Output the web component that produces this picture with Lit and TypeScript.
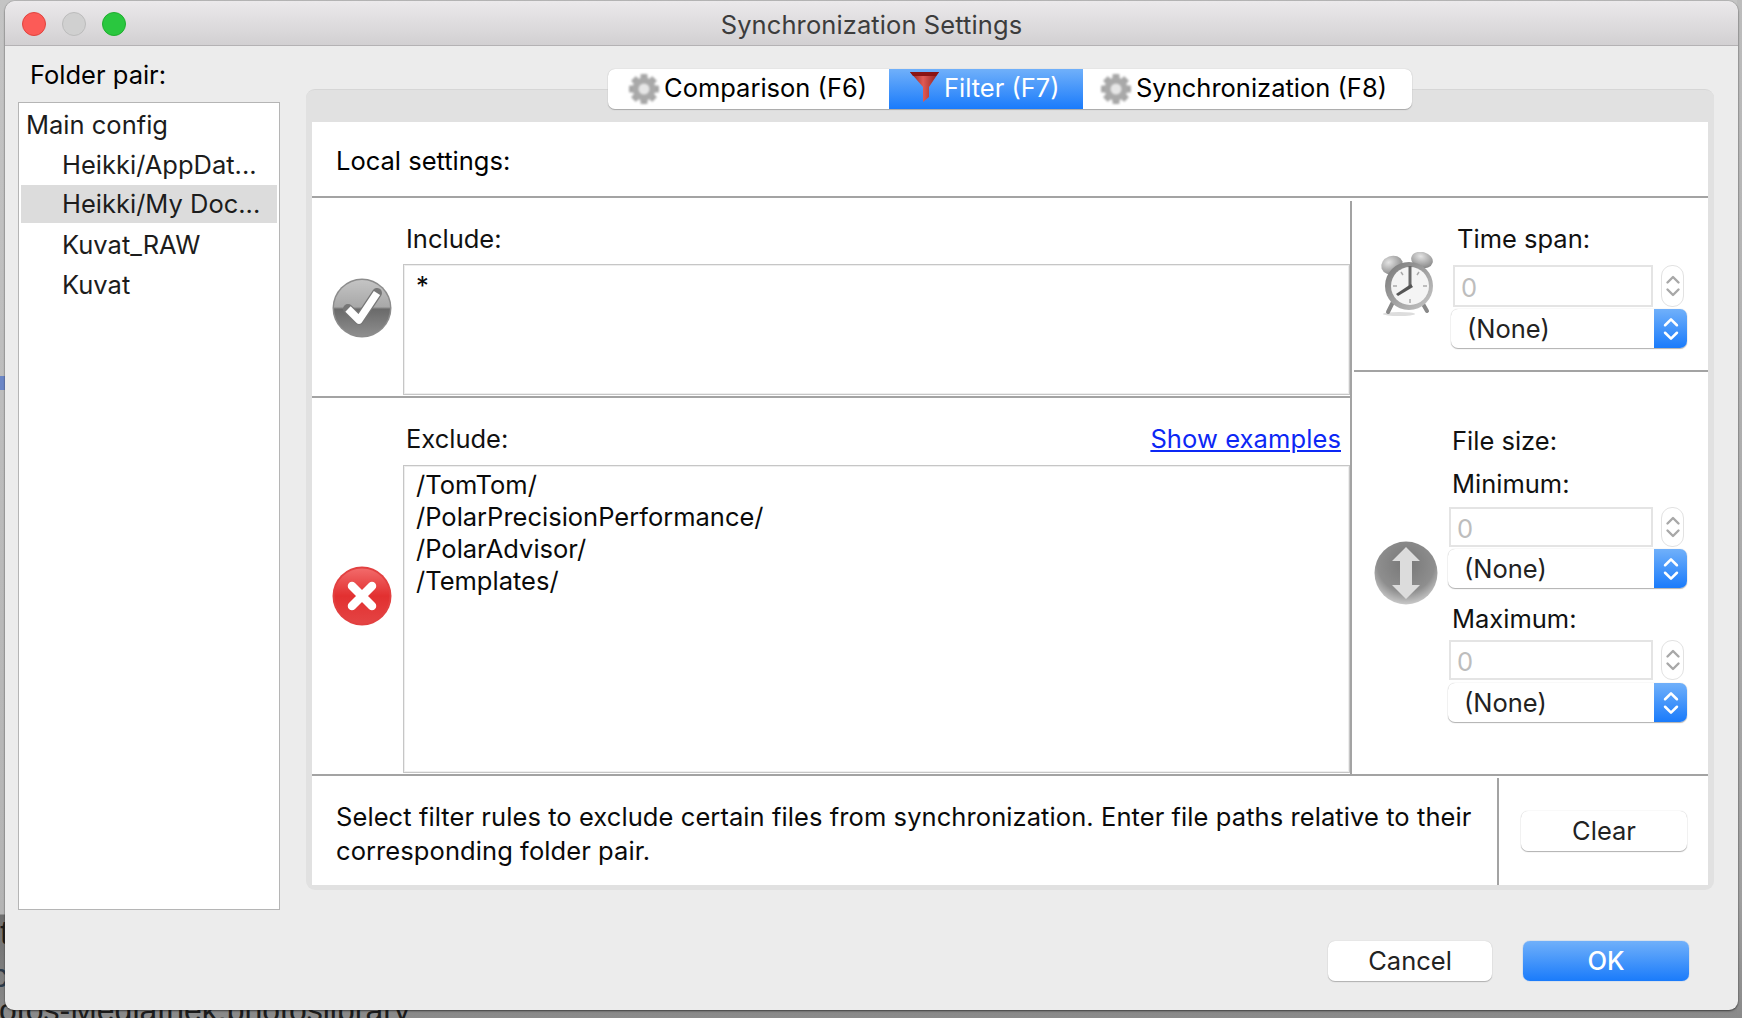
import { LitElement, html, css, svg } from "lit";
import { customElement } from "lit/decorators.js";

const chevrons = html`<svg class="chev" viewBox="0 0 16 26"><path d="M2.5 9.5 8 4l5.500 5.500M2.500 16.500 8 22l5.500-5.500"/></svg>`;

const gear = (cls: string) => html`<svg class=${cls} viewBox="0 0 32 32">
  ${[0, 45, 90, 135].map((a) => svg`<rect x="12.500" y="1" width="7" height="30" rx="1" fill="#a6a6a6" transform="rotate(${a} 16 16)"/>`)}
  <circle cx="16" cy="16" r="11.500" fill="#a9a9a9"/>
  <circle cx="16" cy="16" r="5.500" fill="#e6e6e6"/>
</svg>`;

@customElement("app-root")
export class AppRoot extends LitElement {
  static styles = css`
    :host { display: block; font-family: Inter, "Liberation Sans", Arial, sans-serif; font-size: 25.5px; color: #000; }
    * { box-sizing: border-box; }
    .stage { position: relative; width: 1742px; height: 1018px; overflow: hidden;
      background: linear-gradient(180deg, #c4c4c4 0, #b4b4b4 914px, #6f6f6f 915px, #8b8b8b 1018px); }
    .bgtext { position: absolute; color: #1c1c1c; line-height: 1; white-space: nowrap; font-family: "Liberation Sans", Arial, sans-serif; }
    .bg1 { left: -1px; top: 994px; font-size: 32px; }
    .bg2 { left: 0; top: 915px; font-size: 34px; }
    .bg3 { left: -9px; top: 958px; font-size: 34px; color: #2c3a4a; }
    .bgblue { position: absolute; left: 0; top: 376px; width: 6px; height: 14px; background: #6b86c6; }
    .bgside { position: absolute; right: 0; top: 0; width: 5px; height: 1018px;
      background: linear-gradient(180deg, #bdbdbd, #9f9f9f 900px, #8a8a8a); }
    .window { position: relative; width: 1733px; height: 1009px; margin: 1px 0 0 5px; background: #ececec;
      border-radius: 10px 10px 9px 9px; display: flex; flex-direction: column;
      box-shadow: 0 0 1px #555, 0 1px 2px rgba(0,0,0,.55); }
    .title { height: 45px; flex: none; display: grid; grid-template-columns: 1fr auto 1fr; align-items: center;
      background: linear-gradient(180deg, #ebe9eb, #d2d0d2); border-bottom: 1px solid #b4b2b4;
      border-radius: 10px 10px 0 0; color: #3c3c3c; }
    .ttl { padding-top: 2px; letter-spacing: .1px; }
    .lights { display: flex; gap: 16px; padding-left: 17px; }
    .light { width: 24px; height: 24px; border-radius: 50%; border: 1px solid; margin-top: 2px; }
    .red { background: #fc5b57; border-color: #e0443e; }
    .gray { background: #d0d0d0; border-color: #bcbcbc; }
    .green { background: #2ac73f; border-color: #1fae2e; }
    .body { height: 864px; flex: none; display: grid; grid-template-columns: 262px 1408px; column-gap: 26px; padding-left: 13px; }
    .left { display: flex; flex-direction: column; }
    .fp { height: 56px; line-height: 58px; padding-left: 12px; }
    .list { height: 808px; background: #fff; border: 1px solid #b5b5b5; padding: 2px 2px 2px; color: #1c1c1c; }
    .row { height: 40px; line-height: 38px; padding-left: 5px; white-space: nowrap; border-block: 1px solid #fff; }
    .row.sub { padding-left: 41px; }
    .row.sel { background: #dcdcdc; border-top: 0; border-bottom-width: 2px; }
    .panel { margin-top: 43px; height: 801px; background: #e1e1e1; border-radius: 9px; border-top: 1px solid #d6d6d6;
      padding: 0 6px 5px; display: flex; flex-direction: column; align-items: center; }
    .tabs { margin-top: -21px; height: 40px; width: 804px; flex: none; background: #fff; border-radius: 7px;
      box-shadow: 0 1px 1px #a8a8a8, 0 0 1px #b4b4b4; display: grid; grid-template-columns: 281px 194px 329px; overflow: hidden; }
    .tab { display: flex; align-items: center; white-space: nowrap; line-height: 38px; }
    .tab span { margin-top: -2px; }
    .tab.t1 { padding-left: 20px; gap: 4px; }
    .tab.t2 { padding-left: 20px; gap: 4px; color: #fff;
      background: linear-gradient(180deg, #70b0fa, #1a7bfb); }
    .tab.t3 { padding-left: 17px; gap: 4px; }
    .gear { width: 32px; height: 32px; flex: none; filter: blur(.8px); }
    .funnel { width: 31px; height: 31px; flex: none; margin-top: -5px; }
    .sheet { margin-top: 13px; width: 1396px; flex: 1; background: #fff; display: flex; flex-direction: column; }
    .local { height: 74px; flex: none; padding: 22px 0 0 24px; line-height: 34px; border: 0; }
    .rule { height: 2px; flex: none; background: #a3a3a3; }
    .mid { height: 576px; flex: none; display: grid; grid-template-columns: 1038px 2px 356px; }
    .vline { background: #a3a3a3; margin-top: 3px; }
    .cols { display: flex; flex-direction: column; }
    .inc { height: 198px; flex: none; display: flex; }
    .exc { height: 376px; flex: none; display: flex; }
    .badge { width: 91px; flex: none; padding-left: 20px; }
    .badge svg { display: block; width: 60px; height: 60px; filter: blur(.3px); }
    .inc .badge { padding-top: 80px; }
    .exc .badge { padding-top: 168px; }
    .fields { flex: 1; display: flex; flex-direction: column; padding-top: 26px; min-width: 0; }
    .lab { height: 30px; line-height: 30px; flex: none; padding-left: 3px; color: #111; }
    .labrow { display: flex; justify-content: space-between; padding-right: 9px; }
    .link { color: #0c27f5; text-decoration: underline; letter-spacing: .1px; }
    .box { border: 1px solid #c6c6c6; box-shadow: 0 0 0 1px #eee inset; padding: 3px 0 0 12px; line-height: 32px; color: #0a0a0a; }
    .inc .box { margin-top: 10px; height: 131px; padding-top: 5px; }
    .exc .box { margin-top: 11px; height: 308px; }
    .right { display: flex; flex-direction: column; }
    .time { height: 172px; flex: none; display: flex; }
    .rule2 { margin-left: 2px; }
    .size { flex: 1; display: flex; }
    .ico { display: block; width: 64px; height: 64px; flex: none; filter: blur(.7px); }
    .time .ico { margin: 54px 0 0 25px; }
    .size .ico { margin: 169px 0 0 22px; }
    .ctl { display: flex; flex-direction: column; }
    .time .ctl { margin-left: 10px; padding-top: 26px; width: 236px; }
    .size .ctl { margin-left: 10px; padding-top: 54px; width: 239px; }
    .time .lab { padding-left: 6px; }
    .size .lab { padding-left: 4px; }
    .numrow { display: flex; flex: none; }
    .num { border: 2px solid #e4e4e4; color: #bdbdbd; padding-left: 6px; line-height: 42px; flex: none; }
    .step { flex: none; width: 23px; margin-left: 8px; border: 1px solid #e2e2e2; border-radius: 11px; display: flex; align-items: center; justify-content: center; }
    .step .chev { width: 16px; height: 30px; stroke: #a8a8a8; stroke-width: 2.400; }
    .time .numrow { margin: 11px 0 0 2px; height: 42px; }
    .time .num { width: 200px; }
    .size .numrow { height: 40px; margin-left: 1px; }
    .size .num { width: 204px; line-height: 40px; }
    .m1 { margin-top: 13px; }
    .m2 { margin-top: 16px; }
    .n1 { margin-top: 8px; }
    .n2 { margin-top: 6px; }
    .select { height: 39px; flex: none; display: flex; background: #fff; border-radius: 7px; margin-top: 2px;
      box-shadow: 0 1px 1px #b0b0b0, 0 0 1px #bcbcbc; overflow: hidden; color: #222; }
    .select.s3 { margin-top: 3px; }
    .select span { flex: 1; line-height: 39px; padding-left: 16px; }
    .blue { width: 33px; flex: none; background: linear-gradient(180deg, #70b0fa, #1a7bfb); display: flex; align-items: center; justify-content: center; }
    .blue .chev { width: 18px; height: 28px; stroke: #fff; stroke-width: 2.400; }
    .chev { fill: none; stroke-linecap: round; stroke-linejoin: round; }
    .foot { flex: 1; display: flex; min-height: 0; }
    .help { width: 1185px; flex: none; padding: 24px 0 0 24px; line-height: 34px; color: #0a0a0a; white-space: nowrap; letter-spacing: .08px; }
    .vl2 { width: 2px; flex: none; background: #a3a3a3; margin-top: 2px; }
    .btn { height: 40px; flex: none; background: #fff; border-radius: 7px; box-shadow: 0 1px 1px #b0b0b0, 0 0 1px #bcbcbc;
      display: flex; align-items: center; justify-content: center; color: #222; line-height: 38px; }
    .clear { width: 166px; margin: 35px 0 0 22px; }
    .actions { flex: none; display: flex; justify-content: flex-end; gap: 31px; padding: 31px 49px 0 0; }
    .cancel { width: 164px; }
    .ok { width: 166px; background: linear-gradient(180deg, #70b0fa, #1a7bfb); color: #fff; font-weight: 500; box-shadow: 0 0 1px #3a85e8; }
  `;

  private numRow(rowCls: string) {
    return html`<div class="numrow ${rowCls}"><div class="num">0</div><div class="step">${chevrons}</div></div>`;
  }
  private select(cls = "") {
    return html`<div class="select ${cls}"><span>(None)</span><div class="blue">${chevrons}</div></div>`;
  }

  render() {
    return html`<div class="stage">
      <div class="bgside"></div>
      <div class="bgblue"></div>
      <div class="bgtext bg2">t</div>
      <div class="bgtext bg3">c</div>
      <div class="bgtext bg1">otos-Mediathek.photoslibrary</div>
      <div class="window">
        <div class="title">
          <div class="lights"><div class="light red"></div><div class="light gray"></div><div class="light green"></div></div>
          <div class="ttl">Synchronization Settings</div>
          <div></div>
        </div>
        <div class="body">
          <div class="left">
            <div class="fp">Folder pair:</div>
            <div class="list">
              <div class="row">Main config</div>
              <div class="row sub">Heikki/AppDat...</div>
              <div class="row sub sel">Heikki/My Doc...</div>
              <div class="row sub">Kuvat_RAW</div>
              <div class="row sub">Kuvat</div>
            </div>
          </div>
          <div class="panel">
            <div class="tabs">
              <div class="tab t1">${gear("gear")}<span>Comparison (F6)</span></div>
              <div class="tab t2">
                <svg class="funnel" viewBox="0 0 31 31">
                  <defs><linearGradient id="fn" x1="0" x2="1" y1="0" y2="0"><stop offset="0" stop-color="#8c1c1c"/><stop offset=".45" stop-color="#e05a55"/><stop offset="1" stop-color="#8a1a1a"/></linearGradient></defs>
                  <path d="M1 1h29l-10 15v10l-6 5V16z" fill="url(#fn)"/>
                  <path d="M1 1h29l-3 4H4z" fill="#8a1414"/>
                </svg>
                <span>Filter (F7)</span>
              </div>
              <div class="tab t3">${gear("gear")}<span>Synchronization (F8)</span></div>
            </div>
            <div class="sheet">
              <div class="local">Local settings:</div>
              <div class="rule"></div>
              <div class="mid">
                <div class="cols">
                  <div class="inc">
                    <div class="badge">
                      <svg viewBox="0 0 60 60">
                        <defs><linearGradient id="ck" x1="0" x2="0" y1="0" y2="1"><stop offset="0" stop-color="#c4c4c4"/><stop offset=".48" stop-color="#a8a8a8"/><stop offset=".52" stop-color="#6a6a6a"/><stop offset="1" stop-color="#8e8e8e"/></linearGradient></defs>
                        <circle cx="30" cy="30" r="29.500" fill="#8c8c8c"/>
                        <circle cx="30" cy="30" r="28" fill="url(#ck)"/>
                        <path d="M16 31l11 11L45 15" fill="none" stroke="#777" stroke-width="10" stroke-linejoin="round" stroke-linecap="round"/>
                        <path d="M16 31l11 11L45 15" fill="none" stroke="#fff" stroke-width="7.500" stroke-linejoin="round"/>
                      </svg>
                    </div>
                    <div class="fields">
                      <div class="lab">Include:</div>
                      <div class="box">*</div>
                    </div>
                  </div>
                  <div class="rule"></div>
                  <div class="exc">
                    <div class="badge">
                      <svg viewBox="0 0 60 60">
                        <defs><linearGradient id="xr" x1="0" x2="0" y1="0" y2="1"><stop offset="0" stop-color="#f26a6a"/><stop offset=".5" stop-color="#e23030"/><stop offset="1" stop-color="#e44444"/></linearGradient></defs>
                        <circle cx="30" cy="30" r="29.500" fill="#e24040"/>
                        <circle cx="30" cy="30" r="27.500" fill="url(#xr)"/>
                        <path d="M20 20l20 20M40 20L20 40" fill="none" stroke="#fff" stroke-width="8.500" stroke-linecap="round"/>
                      </svg>
                    </div>
                    <div class="fields">
                      <div class="lab labrow"><span>Exclude:</span><span class="link">Show examples</span></div>
                      <div class="box">/TomTom/<br>/PolarPrecisionPerformance/<br>/PolarAdvisor/<br>/Templates/</div>
                    </div>
                  </div>
                </div>
                <div class="vline"></div>
                <div class="right">
                  <div class="time">
                    <svg class="ico" viewBox="0 0 64 64">
                      <defs>
                        <radialGradient id="bl" cx=".4" cy=".3" r=".8"><stop offset="0" stop-color="#e4e4e4"/><stop offset="1" stop-color="#7c7c7c"/></radialGradient>
                        <linearGradient id="rim" x1="0" x2="1" y1="0" y2="1"><stop offset="0" stop-color="#777"/><stop offset="1" stop-color="#c8c8c8"/></linearGradient>
                      </defs>
                      <ellipse cx="22" cy="62" rx="16" ry="2" fill="#ddd"/>
                      <path d="M16 50l-5 10M46 52l4 7" stroke="#888" stroke-width="4" stroke-linecap="round"/>
                      <ellipse cx="15" cy="13" rx="11" ry="9" fill="url(#bl)" transform="rotate(-20 15 13)"/>
                      <ellipse cx="45" cy="8" rx="11" ry="8" fill="url(#bl)" transform="rotate(15 45 8)"/>
                      <circle cx="32" cy="34" r="24" fill="url(#rim)"/>
                      <circle cx="33" cy="34" r="19" fill="#f4f4f4"/>
                      <path d="M33 17v4M33 47v4M16 34h4M46 34h4M24 20l2 3M42 20l-2 3" stroke="#aaa" stroke-width="1.500"/>
                      <path d="M31.500 14h3v20h-3z" fill="#6a6a6a"/>
                      <path d="M34 32l2 3-15 9-2-2z" fill="#555"/>
                    </svg>
                    <div class="ctl">
                      <div class="lab">Time span:</div>
                      ${this.numRow("")}
                      ${this.select()}
                    </div>
                  </div>
                  <div class="rule rule2"></div>
                  <div class="size">
                    <svg class="ico" viewBox="0 0 64 64">
                      <defs><radialGradient id="sz" cx=".5" cy=".35" r=".7"><stop offset="0" stop-color="#777"/><stop offset=".65" stop-color="#8e8e8e"/><stop offset="1" stop-color="#d8d8d8"/></radialGradient></defs>
                      <circle cx="32" cy="32" r="31.500" fill="url(#sz)"/>
                      <path d="M32 6l14 14h-8v24h8L32 58 18 44h8V20h-8z" fill="#dcdcdc"/>
                    </svg>
                    <div class="ctl">
                      <div class="lab">File size:</div>
                      <div class="lab m1">Minimum:</div>
                      ${this.numRow("n1")}
                      ${this.select()}
                      <div class="lab m2">Maximum:</div>
                      ${this.numRow("n2")}
                      ${this.select("s3")}
                    </div>
                  </div>
                </div>
              </div>
              <div class="rule"></div>
              <div class="foot">
                <div class="help">Select filter rules to exclude certain files from synchronization. Enter file paths relative to their<br>corresponding folder pair.</div>
                <div class="vl2"></div>
                <div class="btn clear">Clear</div>
              </div>
            </div>
          </div>
        </div>
        <div class="actions">
          <div class="btn cancel">Cancel</div>
          <div class="btn ok">OK</div>
        </div>
      </div>
    </div>`;
  }
}
